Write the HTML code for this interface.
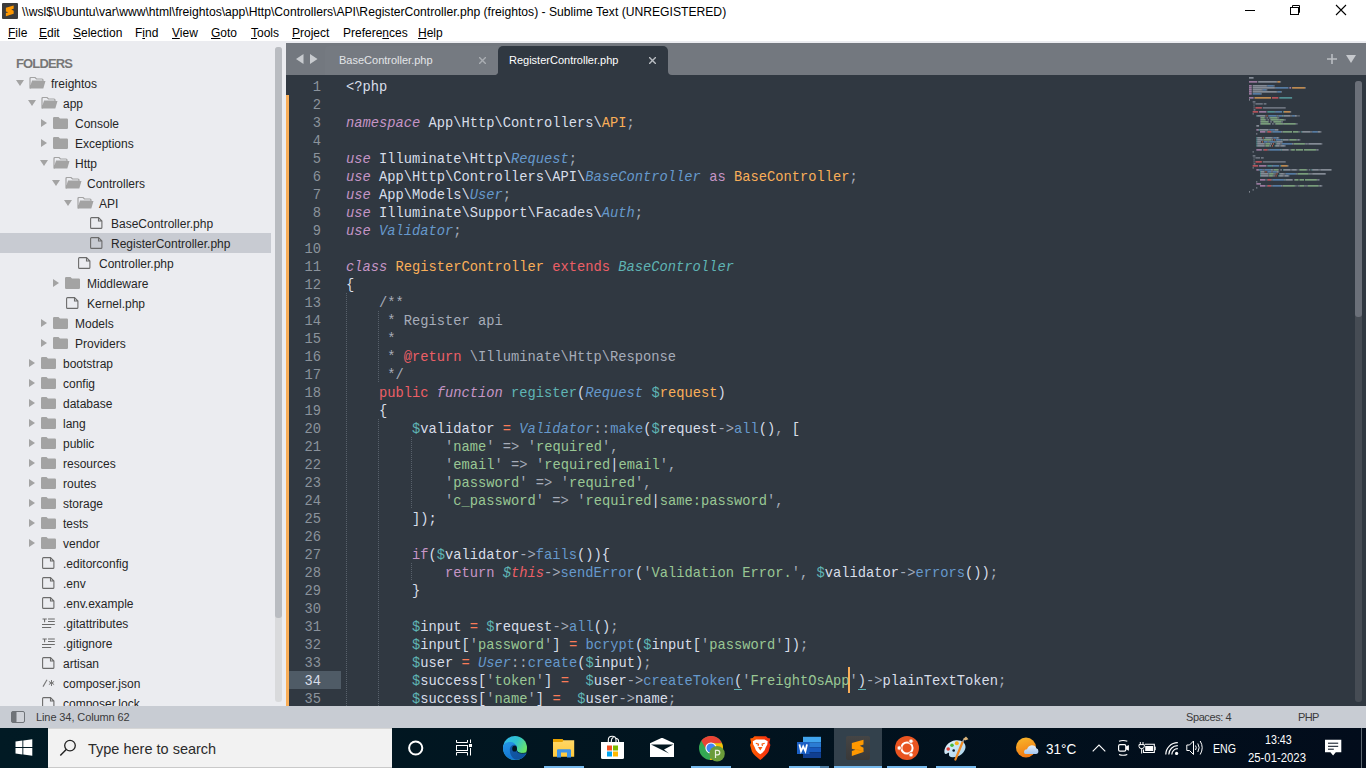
<!DOCTYPE html><html><head><meta charset="utf-8"><style>
*{margin:0;padding:0;box-sizing:border-box}
html,body{width:1366px;height:768px;overflow:hidden;background:#fff;position:relative;font-family:"Liberation Sans",sans-serif}
.a{position:absolute}
#title{left:0;top:0;width:1366px;height:22px;background:#fff}
#ttext{left:22px;top:4px;font-size:12.15px;line-height:16px;color:#000;white-space:pre}
#menu{left:0;top:22px;width:1366px;height:19px;background:#fff}
.mi{position:absolute;top:3px;font-size:12px;line-height:16px;color:#000;white-space:pre}
.mi u{text-decoration:underline;text-underline-offset:1px}
#side{left:0;top:41px;width:286px;height:665px;background:#ebecf0;overflow:hidden}
.row{position:absolute;left:0;width:271px;height:20px}
.row.sel{background:#c8cbd2}
.lbl{position:absolute;top:3px;font-size:12px;line-height:16px;color:#262626;white-space:pre}
#fold{left:16px;top:15px;font-size:13px;letter-spacing:-0.85px;font-weight:bold;color:#777;line-height:16px}
#tabs{left:286px;top:41px;width:1080px;height:34px;background:#ebecf0}
#tabbar{left:286px;top:43px;width:1080px;height:32px;background:#73787f}
.tab{position:absolute;top:3px;height:29px;border-radius:4px 4px 0 0}
.tabt{position:absolute;top:9px;font-size:11px;line-height:16px;white-space:pre}
#ed{left:286px;top:75px;width:1080px;height:631px;background:#303841;overflow:hidden}
#code{position:absolute;left:60px;top:4px;font-family:"Liberation Mono",monospace;font-size:13.75px;line-height:18px;color:#d8dee9;white-space:pre}
#code i,#mm i{font-style:normal}
i.w{color:#d8dee9} i.wu{color:#d8dee9}
i.g{color:#a6acb9}
i.p{color:#c695c6;font-style:italic!important}
i.pn{color:#c695c6}
i.o{color:#f9ae58}
i.bi{color:#6699cc;font-style:italic!important}
i.b{color:#6699cc}
i.t{color:#5fb4b4}
i.ti{color:#5fb4b4;font-style:italic!important}
i.r{color:#ec5f66}
i.ri{color:#ec5f66;font-style:italic!important}
i.op{color:#f97b58}
i.s{color:#99c794}
#gut{position:absolute;left:0;top:4px;width:35px;font-family:"Liberation Mono",monospace;font-size:13.75px;line-height:18px;color:#8b939c;text-align:right;white-space:pre}
#mm{position:absolute;left:963px;top:2px;font-family:"Liberation Mono",monospace;font-size:13.75px;line-height:18px;color:#d8dee9;white-space:pre;transform:scale(0.1111);transform-origin:0 0}
.gd{position:absolute;width:1px;background:repeating-linear-gradient(to bottom,#58616b 0 1px,transparent 1px 2px)}
#status{left:0;top:706px;width:1366px;height:22px;background:#c8ccd3}
#task{left:0;top:728px;width:1366px;height:40px;background:linear-gradient(to right,#011a24 0%,#01141f 50%,#020c1b 100%)}
</style></head><body><div id="title" class="a"><svg class="a" style="left:2px;top:3px" width="16" height="16" viewBox="0 0 16 16"><rect x="0" y="0" width="16" height="16" rx="1" fill="#3c3c3c"/><g transform="scale(0.6667)"><path d="M5.83 7.08 L17.5 3.75 L17.5 8.54 L13.75 9.79 L17.5 11.67 L17.5 16.04 L5.83 20 L5.83 15 L9.58 13.75 L5.83 12.71Z" fill="#ff9800"/></g></svg><div id="ttext" class="a">\\wsl$\Ubuntu\var\www\html\freightos\app\Http\Controllers\API\RegisterController.php (freightos) - Sublime Text (UNREGISTERED)</div><svg class="a" style="left:1240px;top:0" width="126" height="22"><rect x="5" y="10" width="10" height="1" fill="#000"/><rect x="50.5" y="7.5" width="8" height="7" fill="none" stroke="#000" stroke-width="1"/><path d="M52.5 7.5 V5.5 H59.5 V12.5 H58.5" fill="none" stroke="#000" stroke-width="1"/><path d="M96 5 L106 15 M106 5 L96 15" stroke="#000" stroke-width="1.1"/></svg></div><div id="menu" class="a"><div class="mi" style="left:8px"><u>F</u>ile</div><div class="mi" style="left:39px"><u>E</u>dit</div><div class="mi" style="left:73px"><u>S</u>election</div><div class="mi" style="left:135px">F<u>i</u>nd</div><div class="mi" style="left:172px"><u>V</u>iew</div><div class="mi" style="left:211px"><u>G</u>oto</div><div class="mi" style="left:251px"><u>T</u>ools</div><div class="mi" style="left:292px"><u>P</u>roject</div><div class="mi" style="left:343px">Prefere<u>n</u>ces</div><div class="mi" style="left:418px"><u>H</u>elp</div></div><div id="side" class="a"><div id="fold" class="a">FOLDERS</div><div class="row" style="top:32px"><svg class="a" style="left:16px;top:7px" width="8" height="6"><path d="M0 0H8L4 6Z" fill="#a3a3a3"/></svg><svg class="a" style="left:29px;top:4px" width="17" height="12" viewBox="0 0 17 12"><path d="M1 11 V1.5 Q1 0.5 2 0.5 H6 L7.5 2 H13 Q14 2 14 3 V4 H3.5 L1.5 11Z" fill="none" stroke="#a3a3a3" stroke-width="1.2"/><path d="M3.3 4 H16.5 L14.3 11.5 H1 Z" fill="#a3a3a3"/></svg><div class="lbl" style="left:51px">freightos</div></div><div class="row" style="top:52px"><svg class="a" style="left:28px;top:7px" width="8" height="6"><path d="M0 0H8L4 6Z" fill="#a3a3a3"/></svg><svg class="a" style="left:41px;top:4px" width="17" height="12" viewBox="0 0 17 12"><path d="M1 11 V1.5 Q1 0.5 2 0.5 H6 L7.5 2 H13 Q14 2 14 3 V4 H3.5 L1.5 11Z" fill="none" stroke="#a3a3a3" stroke-width="1.2"/><path d="M3.3 4 H16.5 L14.3 11.5 H1 Z" fill="#a3a3a3"/></svg><div class="lbl" style="left:63px">app</div></div><div class="row" style="top:72px"><svg class="a" style="left:41px;top:6px" width="6" height="8"><path d="M0 0V8L6 4Z" fill="#a3a3a3"/></svg><svg class="a" style="left:53px;top:4px" width="15" height="12" viewBox="0 0 15 12"><path d="M0 1.2 Q0 0 1.2 0 H5.5 L7 1.5 H13.8 Q15 1.5 15 2.7 V10.8 Q15 12 13.8 12 H1.2 Q0 12 0 10.8Z" fill="#a3a3a3"/></svg><div class="lbl" style="left:75px">Console</div></div><div class="row" style="top:92px"><svg class="a" style="left:41px;top:6px" width="6" height="8"><path d="M0 0V8L6 4Z" fill="#a3a3a3"/></svg><svg class="a" style="left:53px;top:4px" width="15" height="12" viewBox="0 0 15 12"><path d="M0 1.2 Q0 0 1.2 0 H5.5 L7 1.5 H13.8 Q15 1.5 15 2.7 V10.8 Q15 12 13.8 12 H1.2 Q0 12 0 10.8Z" fill="#a3a3a3"/></svg><div class="lbl" style="left:75px">Exceptions</div></div><div class="row" style="top:112px"><svg class="a" style="left:40px;top:7px" width="8" height="6"><path d="M0 0H8L4 6Z" fill="#a3a3a3"/></svg><svg class="a" style="left:53px;top:4px" width="17" height="12" viewBox="0 0 17 12"><path d="M1 11 V1.5 Q1 0.5 2 0.5 H6 L7.5 2 H13 Q14 2 14 3 V4 H3.5 L1.5 11Z" fill="none" stroke="#a3a3a3" stroke-width="1.2"/><path d="M3.3 4 H16.5 L14.3 11.5 H1 Z" fill="#a3a3a3"/></svg><div class="lbl" style="left:75px">Http</div></div><div class="row" style="top:132px"><svg class="a" style="left:52px;top:7px" width="8" height="6"><path d="M0 0H8L4 6Z" fill="#a3a3a3"/></svg><svg class="a" style="left:65px;top:4px" width="17" height="12" viewBox="0 0 17 12"><path d="M1 11 V1.5 Q1 0.5 2 0.5 H6 L7.5 2 H13 Q14 2 14 3 V4 H3.5 L1.5 11Z" fill="none" stroke="#a3a3a3" stroke-width="1.2"/><path d="M3.3 4 H16.5 L14.3 11.5 H1 Z" fill="#a3a3a3"/></svg><div class="lbl" style="left:87px">Controllers</div></div><div class="row" style="top:152px"><svg class="a" style="left:64px;top:7px" width="8" height="6"><path d="M0 0H8L4 6Z" fill="#a3a3a3"/></svg><svg class="a" style="left:77px;top:4px" width="17" height="12" viewBox="0 0 17 12"><path d="M1 11 V1.5 Q1 0.5 2 0.5 H6 L7.5 2 H13 Q14 2 14 3 V4 H3.5 L1.5 11Z" fill="none" stroke="#a3a3a3" stroke-width="1.2"/><path d="M3.3 4 H16.5 L14.3 11.5 H1 Z" fill="#a3a3a3"/></svg><div class="lbl" style="left:99px">API</div></div><div class="row" style="top:172px"><svg class="a" style="left:90px;top:4px" width="13" height="12" viewBox="0 0 13 12"><path d="M1.5 0.6 H8.5 L11.9 4 V10.4 Q11.9 11.4 10.9 11.4 H1.5 Q0.6 11.4 0.6 10.4 V1.6 Q0.6 0.6 1.5 0.6Z M8.5 0.6 V4 H11.9" fill="none" stroke="#6b6b6b" stroke-width="1.1"/></svg><div class="lbl" style="left:111px">BaseController.php</div></div><div class="row sel" style="top:192px"><svg class="a" style="left:90px;top:4px" width="13" height="12" viewBox="0 0 13 12"><path d="M1.5 0.6 H8.5 L11.9 4 V10.4 Q11.9 11.4 10.9 11.4 H1.5 Q0.6 11.4 0.6 10.4 V1.6 Q0.6 0.6 1.5 0.6Z M8.5 0.6 V4 H11.9" fill="none" stroke="#6b6b6b" stroke-width="1.1"/></svg><div class="lbl" style="left:111px">RegisterController.php</div></div><div class="row" style="top:212px"><svg class="a" style="left:78px;top:4px" width="13" height="12" viewBox="0 0 13 12"><path d="M1.5 0.6 H8.5 L11.9 4 V10.4 Q11.9 11.4 10.9 11.4 H1.5 Q0.6 11.4 0.6 10.4 V1.6 Q0.6 0.6 1.5 0.6Z M8.5 0.6 V4 H11.9" fill="none" stroke="#6b6b6b" stroke-width="1.1"/></svg><div class="lbl" style="left:99px">Controller.php</div></div><div class="row" style="top:232px"><svg class="a" style="left:53px;top:6px" width="6" height="8"><path d="M0 0V8L6 4Z" fill="#a3a3a3"/></svg><svg class="a" style="left:65px;top:4px" width="15" height="12" viewBox="0 0 15 12"><path d="M0 1.2 Q0 0 1.2 0 H5.5 L7 1.5 H13.8 Q15 1.5 15 2.7 V10.8 Q15 12 13.8 12 H1.2 Q0 12 0 10.8Z" fill="#a3a3a3"/></svg><div class="lbl" style="left:87px">Middleware</div></div><div class="row" style="top:252px"><svg class="a" style="left:66px;top:4px" width="13" height="12" viewBox="0 0 13 12"><path d="M1.5 0.6 H8.5 L11.9 4 V10.4 Q11.9 11.4 10.9 11.4 H1.5 Q0.6 11.4 0.6 10.4 V1.6 Q0.6 0.6 1.5 0.6Z M8.5 0.6 V4 H11.9" fill="none" stroke="#6b6b6b" stroke-width="1.1"/></svg><div class="lbl" style="left:87px">Kernel.php</div></div><div class="row" style="top:272px"><svg class="a" style="left:41px;top:6px" width="6" height="8"><path d="M0 0V8L6 4Z" fill="#a3a3a3"/></svg><svg class="a" style="left:53px;top:4px" width="15" height="12" viewBox="0 0 15 12"><path d="M0 1.2 Q0 0 1.2 0 H5.5 L7 1.5 H13.8 Q15 1.5 15 2.7 V10.8 Q15 12 13.8 12 H1.2 Q0 12 0 10.8Z" fill="#a3a3a3"/></svg><div class="lbl" style="left:75px">Models</div></div><div class="row" style="top:292px"><svg class="a" style="left:41px;top:6px" width="6" height="8"><path d="M0 0V8L6 4Z" fill="#a3a3a3"/></svg><svg class="a" style="left:53px;top:4px" width="15" height="12" viewBox="0 0 15 12"><path d="M0 1.2 Q0 0 1.2 0 H5.5 L7 1.5 H13.8 Q15 1.5 15 2.7 V10.8 Q15 12 13.8 12 H1.2 Q0 12 0 10.8Z" fill="#a3a3a3"/></svg><div class="lbl" style="left:75px">Providers</div></div><div class="row" style="top:312px"><svg class="a" style="left:29px;top:6px" width="6" height="8"><path d="M0 0V8L6 4Z" fill="#a3a3a3"/></svg><svg class="a" style="left:41px;top:4px" width="15" height="12" viewBox="0 0 15 12"><path d="M0 1.2 Q0 0 1.2 0 H5.5 L7 1.5 H13.8 Q15 1.5 15 2.7 V10.8 Q15 12 13.8 12 H1.2 Q0 12 0 10.8Z" fill="#a3a3a3"/></svg><div class="lbl" style="left:63px">bootstrap</div></div><div class="row" style="top:332px"><svg class="a" style="left:29px;top:6px" width="6" height="8"><path d="M0 0V8L6 4Z" fill="#a3a3a3"/></svg><svg class="a" style="left:41px;top:4px" width="15" height="12" viewBox="0 0 15 12"><path d="M0 1.2 Q0 0 1.2 0 H5.5 L7 1.5 H13.8 Q15 1.5 15 2.7 V10.8 Q15 12 13.8 12 H1.2 Q0 12 0 10.8Z" fill="#a3a3a3"/></svg><div class="lbl" style="left:63px">config</div></div><div class="row" style="top:352px"><svg class="a" style="left:29px;top:6px" width="6" height="8"><path d="M0 0V8L6 4Z" fill="#a3a3a3"/></svg><svg class="a" style="left:41px;top:4px" width="15" height="12" viewBox="0 0 15 12"><path d="M0 1.2 Q0 0 1.2 0 H5.5 L7 1.5 H13.8 Q15 1.5 15 2.7 V10.8 Q15 12 13.8 12 H1.2 Q0 12 0 10.8Z" fill="#a3a3a3"/></svg><div class="lbl" style="left:63px">database</div></div><div class="row" style="top:372px"><svg class="a" style="left:29px;top:6px" width="6" height="8"><path d="M0 0V8L6 4Z" fill="#a3a3a3"/></svg><svg class="a" style="left:41px;top:4px" width="15" height="12" viewBox="0 0 15 12"><path d="M0 1.2 Q0 0 1.2 0 H5.5 L7 1.5 H13.8 Q15 1.5 15 2.7 V10.8 Q15 12 13.8 12 H1.2 Q0 12 0 10.8Z" fill="#a3a3a3"/></svg><div class="lbl" style="left:63px">lang</div></div><div class="row" style="top:392px"><svg class="a" style="left:29px;top:6px" width="6" height="8"><path d="M0 0V8L6 4Z" fill="#a3a3a3"/></svg><svg class="a" style="left:41px;top:4px" width="15" height="12" viewBox="0 0 15 12"><path d="M0 1.2 Q0 0 1.2 0 H5.5 L7 1.5 H13.8 Q15 1.5 15 2.7 V10.8 Q15 12 13.8 12 H1.2 Q0 12 0 10.8Z" fill="#a3a3a3"/></svg><div class="lbl" style="left:63px">public</div></div><div class="row" style="top:412px"><svg class="a" style="left:29px;top:6px" width="6" height="8"><path d="M0 0V8L6 4Z" fill="#a3a3a3"/></svg><svg class="a" style="left:41px;top:4px" width="15" height="12" viewBox="0 0 15 12"><path d="M0 1.2 Q0 0 1.2 0 H5.5 L7 1.5 H13.8 Q15 1.5 15 2.7 V10.8 Q15 12 13.8 12 H1.2 Q0 12 0 10.8Z" fill="#a3a3a3"/></svg><div class="lbl" style="left:63px">resources</div></div><div class="row" style="top:432px"><svg class="a" style="left:29px;top:6px" width="6" height="8"><path d="M0 0V8L6 4Z" fill="#a3a3a3"/></svg><svg class="a" style="left:41px;top:4px" width="15" height="12" viewBox="0 0 15 12"><path d="M0 1.2 Q0 0 1.2 0 H5.5 L7 1.5 H13.8 Q15 1.5 15 2.7 V10.8 Q15 12 13.8 12 H1.2 Q0 12 0 10.8Z" fill="#a3a3a3"/></svg><div class="lbl" style="left:63px">routes</div></div><div class="row" style="top:452px"><svg class="a" style="left:29px;top:6px" width="6" height="8"><path d="M0 0V8L6 4Z" fill="#a3a3a3"/></svg><svg class="a" style="left:41px;top:4px" width="15" height="12" viewBox="0 0 15 12"><path d="M0 1.2 Q0 0 1.2 0 H5.5 L7 1.5 H13.8 Q15 1.5 15 2.7 V10.8 Q15 12 13.8 12 H1.2 Q0 12 0 10.8Z" fill="#a3a3a3"/></svg><div class="lbl" style="left:63px">storage</div></div><div class="row" style="top:472px"><svg class="a" style="left:29px;top:6px" width="6" height="8"><path d="M0 0V8L6 4Z" fill="#a3a3a3"/></svg><svg class="a" style="left:41px;top:4px" width="15" height="12" viewBox="0 0 15 12"><path d="M0 1.2 Q0 0 1.2 0 H5.5 L7 1.5 H13.8 Q15 1.5 15 2.7 V10.8 Q15 12 13.8 12 H1.2 Q0 12 0 10.8Z" fill="#a3a3a3"/></svg><div class="lbl" style="left:63px">tests</div></div><div class="row" style="top:492px"><svg class="a" style="left:29px;top:6px" width="6" height="8"><path d="M0 0V8L6 4Z" fill="#a3a3a3"/></svg><svg class="a" style="left:41px;top:4px" width="15" height="12" viewBox="0 0 15 12"><path d="M0 1.2 Q0 0 1.2 0 H5.5 L7 1.5 H13.8 Q15 1.5 15 2.7 V10.8 Q15 12 13.8 12 H1.2 Q0 12 0 10.8Z" fill="#a3a3a3"/></svg><div class="lbl" style="left:63px">vendor</div></div><div class="row" style="top:512px"><svg class="a" style="left:42px;top:4px" width="13" height="12" viewBox="0 0 13 12"><path d="M1.5 0.6 H8.5 L11.9 4 V10.4 Q11.9 11.4 10.9 11.4 H1.5 Q0.6 11.4 0.6 10.4 V1.6 Q0.6 0.6 1.5 0.6Z M8.5 0.6 V4 H11.9" fill="none" stroke="#6b6b6b" stroke-width="1.1"/></svg><div class="lbl" style="left:63px">.editorconfig</div></div><div class="row" style="top:532px"><svg class="a" style="left:42px;top:4px" width="13" height="12" viewBox="0 0 13 12"><path d="M1.5 0.6 H8.5 L11.9 4 V10.4 Q11.9 11.4 10.9 11.4 H1.5 Q0.6 11.4 0.6 10.4 V1.6 Q0.6 0.6 1.5 0.6Z M8.5 0.6 V4 H11.9" fill="none" stroke="#6b6b6b" stroke-width="1.1"/></svg><div class="lbl" style="left:63px">.env</div></div><div class="row" style="top:552px"><svg class="a" style="left:42px;top:4px" width="13" height="12" viewBox="0 0 13 12"><path d="M1.5 0.6 H8.5 L11.9 4 V10.4 Q11.9 11.4 10.9 11.4 H1.5 Q0.6 11.4 0.6 10.4 V1.6 Q0.6 0.6 1.5 0.6Z M8.5 0.6 V4 H11.9" fill="none" stroke="#6b6b6b" stroke-width="1.1"/></svg><div class="lbl" style="left:63px">.env.example</div></div><div class="row" style="top:572px"><svg class="a" style="left:42px;top:4px" width="14" height="12" viewBox="0 0 14 12"><path d="M0.5 2H4.8 M2.6 2V5.2 M6 2H12.8 M6 4.5H12.8 M0 7.5H12.8 M0 10.5H9.2" stroke="#6b6b6b" stroke-width="1.1"/></svg><div class="lbl" style="left:63px">.gitattributes</div></div><div class="row" style="top:592px"><svg class="a" style="left:42px;top:4px" width="14" height="12" viewBox="0 0 14 12"><path d="M0.5 2H4.8 M2.6 2V5.2 M6 2H12.8 M6 4.5H12.8 M0 7.5H12.8 M0 10.5H9.2" stroke="#6b6b6b" stroke-width="1.1"/></svg><div class="lbl" style="left:63px">.gitignore</div></div><div class="row" style="top:612px"><svg class="a" style="left:42px;top:4px" width="13" height="12" viewBox="0 0 13 12"><path d="M1.5 0.6 H8.5 L11.9 4 V10.4 Q11.9 11.4 10.9 11.4 H1.5 Q0.6 11.4 0.6 10.4 V1.6 Q0.6 0.6 1.5 0.6Z M8.5 0.6 V4 H11.9" fill="none" stroke="#6b6b6b" stroke-width="1.1"/></svg><div class="lbl" style="left:63px">artisan</div></div><div class="row" style="top:632px"><svg class="a" style="left:42px;top:4px" width="14" height="12" viewBox="0 0 14 12"><path d="M1 9.6 L5 2.8" stroke="#777" stroke-width="1.1"/><path d="M9.5 3 V9 M6.9 4.5 L12.1 7.5 M6.9 7.5 L12.1 4.5" stroke="#777" stroke-width="1"/></svg><div class="lbl" style="left:63px">composer.json</div></div><div class="row" style="top:652px"><svg class="a" style="left:42px;top:4px" width="13" height="12" viewBox="0 0 13 12"><path d="M1.5 0.6 H8.5 L11.9 4 V10.4 Q11.9 11.4 10.9 11.4 H1.5 Q0.6 11.4 0.6 10.4 V1.6 Q0.6 0.6 1.5 0.6Z M8.5 0.6 V4 H11.9" fill="none" stroke="#6b6b6b" stroke-width="1.1"/></svg><div class="lbl" style="left:63px">composer.lock</div></div><div class="a" style="left:275px;top:6px;width:7px;height:655px;border-radius:3px;background:#d9dadc"></div><div class="a" style="left:275px;top:6px;width:7px;height:571px;border-radius:3px;background:#b9bcc1"></div></div><div id="tabs" class="a"></div><div id="tabbar" class="a"><div class="a" style="left:200px;top:26px;width:194px;height:6px;background:#303841"></div><div class="a" style="left:0;top:0;width:212px;height:32px;background:#73787f;border-bottom-right-radius:4px"></div><div class="a" style="left:382px;top:0;width:698px;height:32px;background:#73787f;border-bottom-left-radius:4px"></div><svg class="a" style="left:10px;top:11px" width="22" height="10"><path d="M0 5 L7.5 0 V10Z M21.5 5 L14 0 V10Z" fill="#c8cbcf"/></svg><div class="a" style="left:39px;top:3px;width:173px;height:29px;background:#757a81;border-radius:4px 0 4px 0"></div><div class="tabt" style="left:53px;color:#e3e5e8">BaseController.php</div><svg class="a" style="left:193px;top:14px" width="7" height="7"><path d="M0 0L7 7M7 0L0 7" stroke="#a9adb2" stroke-width="1.4"/></svg><div class="tab" style="left:212px;width:170px;background:#303841;border-radius:5px 5px 0 0"></div><div class="tabt" style="left:223px;color:#ffffff">RegisterController.php</div><svg class="a" style="left:363px;top:14px" width="7" height="7"><path d="M0 0L7 7M7 0L0 7" stroke="#b9bdc2" stroke-width="1.4"/></svg><svg class="a" style="left:1041px;top:10px" width="30" height="12"><path d="M5 1V11 M0 6H10" stroke="#babdc2" stroke-width="1.6"/><path d="M19 2H29L24 10Z" fill="#c6c9cd"/></svg></div><div id="ed" class="a"><div class="a" style="left:0;top:20px;width:3px;height:611px;background:#f9ae58"></div><div class="a" style="left:3px;top:596px;width:52px;height:18px;background:#4f5b66"></div><div id="gut">1
2
3
4
5
6
7
8
9
10
11
12
13
14
15
16
17
18
19
20
21
22
23
24
25
26
27
28
29
30
31
32
33
<span style="color:#d8dee9">34</span>
35</div><div id="code"><i class="w">&lt;?php</i>

<i class="p">namespace</i> <i class="w">App\Http\Controllers</i><i class="w">\</i><i class="o">API</i><i class="g">;</i>

<i class="p">use</i> <i class="w">Illuminate\Http</i><i class="w">\</i><i class="bi">Request</i><i class="g">;</i>
<i class="p">use</i> <i class="w">App\Http\Controllers\API</i><i class="w">\</i><i class="bi">BaseController</i> <i class="pn">as</i> <i class="o">BaseController</i><i class="g">;</i>
<i class="p">use</i> <i class="w">App\Models</i><i class="w">\</i><i class="bi">User</i><i class="g">;</i>
<i class="p">use</i> <i class="w">Illuminate\Support\Facades</i><i class="w">\</i><i class="bi">Auth</i><i class="g">;</i>
<i class="p">use</i> <i class="bi">Validator</i><i class="g">;</i>

<i class="p">class</i> <i class="o">RegisterController</i> <i class="r">extends</i> <i class="ti">BaseController</i>
<i class="w">{</i>
    <i class="g">/**</i>
    <i class="g"> * Register api</i>
    <i class="g"> *</i>
    <i class="g"> * </i><i class="r">@return</i><i class="g"> \Illuminate\Http\Response</i>
    <i class="g"> */</i>
    <i class="r">public</i> <i class="p">function</i> <i class="t">register</i><i class="w">(</i><i class="bi">Request</i> <i class="t">$</i><i class="o">request</i><i class="w">)</i>
    <i class="w">{</i>
        <i class="t">$</i><i class="w">validator</i> <i class="op">=</i> <i class="bi">Validator</i><i class="g">::</i><i class="b">make</i><i class="w">(</i><i class="t">$</i><i class="w">request</i><i class="g">-&gt;</i><i class="b">all</i><i class="w">()</i><i class="g">,</i> <i class="w">[</i>
            <i class="g">&#x27;</i><i class="s">name</i><i class="g">&#x27;</i> <i class="g">=&gt;</i> <i class="g">&#x27;</i><i class="s">required</i><i class="g">&#x27;</i><i class="g">,</i>
            <i class="g">&#x27;</i><i class="s">email</i><i class="g">&#x27;</i> <i class="g">=&gt;</i> <i class="g">&#x27;</i><i class="s">required</i><i class="w">|</i><i class="s">email</i><i class="g">&#x27;</i><i class="g">,</i>
            <i class="g">&#x27;</i><i class="s">password</i><i class="g">&#x27;</i> <i class="g">=&gt;</i> <i class="g">&#x27;</i><i class="s">required</i><i class="g">&#x27;</i><i class="g">,</i>
            <i class="g">&#x27;</i><i class="s">c_password</i><i class="g">&#x27;</i> <i class="g">=&gt;</i> <i class="g">&#x27;</i><i class="s">required</i><i class="w">|</i><i class="s">same:password</i><i class="g">&#x27;</i><i class="g">,</i>
        <i class="w">]);</i>

        <i class="pn">if</i><i class="w">(</i><i class="t">$</i><i class="w">validator</i><i class="g">-&gt;</i><i class="b">fails</i><i class="w">()){</i>
            <i class="pn">return</i> <i class="ti">$</i><i class="ri">this</i><i class="g">-&gt;</i><i class="b">sendError</i><i class="w">(</i><i class="g">&#x27;</i><i class="s">Validation Error.</i><i class="g">&#x27;</i><i class="g">,</i> <i class="t">$</i><i class="w">validator</i><i class="g">-&gt;</i><i class="b">errors</i><i class="w">())</i><i class="g">;</i>
        <i class="w">}</i>

        <i class="t">$</i><i class="w">input</i> <i class="op">=</i> <i class="t">$</i><i class="w">request</i><i class="g">-&gt;</i><i class="b">all</i><i class="w">()</i><i class="g">;</i>
        <i class="t">$</i><i class="w">input[</i><i class="g">&#x27;</i><i class="s">password</i><i class="g">&#x27;</i><i class="w">]</i> <i class="op">=</i> <i class="b">bcrypt</i><i class="w">(</i><i class="t">$</i><i class="w">input[</i><i class="g">&#x27;</i><i class="s">password</i><i class="g">&#x27;</i><i class="w">])</i><i class="g">;</i>
        <i class="t">$</i><i class="w">user</i> <i class="op">=</i> <i class="bi">User</i><i class="g">::</i><i class="b">create</i><i class="w">(</i><i class="t">$</i><i class="w">input)</i><i class="g">;</i>
        <i class="t">$</i><i class="w">success[</i><i class="g">&#x27;</i><i class="s">token</i><i class="g">&#x27;</i><i class="w">]</i> <i class="op">=</i>  <i class="t">$</i><i class="w">user</i><i class="g">-&gt;</i><i class="b">createToken</i><i class="wu">(</i><i class="g">&#x27;</i><i class="s">FreightOsApp</i><i class="g">&#x27;</i><i class="wu">)</i><i class="g">-&gt;</i><i class="w">plainTextToken</i><i class="g">;</i>
        <i class="t">$</i><i class="w">success[</i><i class="g">&#x27;</i><i class="s">name</i><i class="g">&#x27;</i><i class="w">]</i> <i class="op">=</i>  <i class="t">$</i><i class="w">user</i><i class="g">-&gt;</i><i class="w">name</i><i class="g">;</i></div><div class="a" style="left:562px;top:592px;width:2px;height:26px;background:#f9ae58"></div><div class="a" style="left:447.75px;top:614px;width:8.25px;height:1px;background:#5fb4b4"></div><div class="a" style="left:571.50px;top:614px;width:8.25px;height:1px;background:#5fb4b4"></div><div class="gd" style="left:60px;top:218px;height:413px"></div><div class="gd" style="left:92px;top:236px;height:72px"></div><div class="gd" style="left:92px;top:344px;height:287px"></div><div class="gd" style="left:125px;top:362px;height:72px"></div><div class="gd" style="left:125px;top:488px;height:18px"></div><svg class="a" style="left:963px;top:2px" width="100" height="120"><rect x="0.00" y="0" width="4.58" height="1.7" fill="#d8dee9" opacity="0.5"/><rect x="0.00" y="4" width="8.25" height="1.7" fill="#c695c6" opacity="0.7"/><rect x="9.17" y="4" width="18.34" height="1.7" fill="#d8dee9" opacity="0.5"/><rect x="27.51" y="4" width="0.92" height="1.7" fill="#d8dee9" opacity="0.5"/><rect x="28.43" y="4" width="2.75" height="1.7" fill="#f9ae58" opacity="0.7"/><rect x="31.18" y="4" width="0.92" height="1.7" fill="#a6acb9" opacity="0.5"/><rect x="0.00" y="8" width="2.75" height="1.7" fill="#c695c6" opacity="0.7"/><rect x="3.67" y="8" width="13.76" height="1.7" fill="#d8dee9" opacity="0.5"/><rect x="17.42" y="8" width="0.92" height="1.7" fill="#d8dee9" opacity="0.5"/><rect x="18.34" y="8" width="6.42" height="1.7" fill="#6699cc" opacity="0.7"/><rect x="24.76" y="8" width="0.92" height="1.7" fill="#a6acb9" opacity="0.5"/><rect x="0.00" y="10" width="2.75" height="1.7" fill="#c695c6" opacity="0.7"/><rect x="3.67" y="10" width="22.01" height="1.7" fill="#d8dee9" opacity="0.5"/><rect x="25.68" y="10" width="0.92" height="1.7" fill="#d8dee9" opacity="0.5"/><rect x="26.59" y="10" width="12.84" height="1.7" fill="#6699cc" opacity="0.7"/><rect x="40.35" y="10" width="1.83" height="1.7" fill="#c695c6" opacity="0.7"/><rect x="43.10" y="10" width="12.84" height="1.7" fill="#f9ae58" opacity="0.7"/><rect x="55.94" y="10" width="0.92" height="1.7" fill="#a6acb9" opacity="0.5"/><rect x="0.00" y="12" width="2.75" height="1.7" fill="#c695c6" opacity="0.7"/><rect x="3.67" y="12" width="9.17" height="1.7" fill="#d8dee9" opacity="0.5"/><rect x="12.84" y="12" width="0.92" height="1.7" fill="#d8dee9" opacity="0.5"/><rect x="13.76" y="12" width="3.67" height="1.7" fill="#6699cc" opacity="0.7"/><rect x="17.42" y="12" width="0.92" height="1.7" fill="#a6acb9" opacity="0.5"/><rect x="0.00" y="14" width="2.75" height="1.7" fill="#c695c6" opacity="0.7"/><rect x="3.67" y="14" width="23.84" height="1.7" fill="#d8dee9" opacity="0.5"/><rect x="27.51" y="14" width="0.92" height="1.7" fill="#d8dee9" opacity="0.5"/><rect x="28.43" y="14" width="3.67" height="1.7" fill="#6699cc" opacity="0.7"/><rect x="32.09" y="14" width="0.92" height="1.7" fill="#a6acb9" opacity="0.5"/><rect x="0.00" y="16" width="2.75" height="1.7" fill="#c695c6" opacity="0.7"/><rect x="3.67" y="16" width="8.25" height="1.7" fill="#6699cc" opacity="0.7"/><rect x="11.92" y="16" width="0.92" height="1.7" fill="#a6acb9" opacity="0.5"/><rect x="0.00" y="20" width="4.58" height="1.7" fill="#c695c6" opacity="0.7"/><rect x="5.50" y="20" width="16.51" height="1.7" fill="#f9ae58" opacity="0.7"/><rect x="22.93" y="20" width="6.42" height="1.7" fill="#ec5f66" opacity="0.7"/><rect x="30.26" y="20" width="12.84" height="1.7" fill="#5fb4b4" opacity="0.7"/><rect x="0.00" y="22" width="0.92" height="1.7" fill="#d8dee9" opacity="0.5"/><rect x="3.67" y="24" width="2.75" height="1.7" fill="#a6acb9" opacity="0.5"/><rect x="4.58" y="26" width="0.92" height="1.7" fill="#a6acb9" opacity="0.5"/><rect x="6.42" y="26" width="7.34" height="1.7" fill="#a6acb9" opacity="0.5"/><rect x="14.67" y="26" width="2.75" height="1.7" fill="#a6acb9" opacity="0.5"/><rect x="4.58" y="28" width="0.92" height="1.7" fill="#a6acb9" opacity="0.5"/><rect x="4.58" y="30" width="0.92" height="1.7" fill="#a6acb9" opacity="0.5"/><rect x="6.42" y="30" width="6.42" height="1.7" fill="#ec5f66" opacity="0.7"/><rect x="13.76" y="30" width="22.93" height="1.7" fill="#a6acb9" opacity="0.5"/><rect x="4.58" y="32" width="1.83" height="1.7" fill="#a6acb9" opacity="0.5"/><rect x="3.67" y="34" width="5.50" height="1.7" fill="#ec5f66" opacity="0.7"/><rect x="10.09" y="34" width="7.34" height="1.7" fill="#c695c6" opacity="0.7"/><rect x="18.34" y="34" width="7.34" height="1.7" fill="#5fb4b4" opacity="0.7"/><rect x="25.68" y="34" width="0.92" height="1.7" fill="#d8dee9" opacity="0.5"/><rect x="26.59" y="34" width="6.42" height="1.7" fill="#6699cc" opacity="0.7"/><rect x="33.93" y="34" width="0.92" height="1.7" fill="#5fb4b4" opacity="0.7"/><rect x="34.85" y="34" width="6.42" height="1.7" fill="#f9ae58" opacity="0.7"/><rect x="41.27" y="34" width="0.92" height="1.7" fill="#d8dee9" opacity="0.5"/><rect x="3.67" y="36" width="0.92" height="1.7" fill="#d8dee9" opacity="0.5"/><rect x="7.34" y="38" width="0.92" height="1.7" fill="#5fb4b4" opacity="0.7"/><rect x="8.25" y="38" width="8.25" height="1.7" fill="#d8dee9" opacity="0.5"/><rect x="17.42" y="38" width="0.92" height="1.7" fill="#f97b58" opacity="0.7"/><rect x="19.26" y="38" width="8.25" height="1.7" fill="#6699cc" opacity="0.7"/><rect x="27.51" y="38" width="1.83" height="1.7" fill="#a6acb9" opacity="0.5"/><rect x="29.34" y="38" width="3.67" height="1.7" fill="#6699cc" opacity="0.7"/><rect x="33.01" y="38" width="0.92" height="1.7" fill="#d8dee9" opacity="0.5"/><rect x="33.93" y="38" width="0.92" height="1.7" fill="#5fb4b4" opacity="0.7"/><rect x="34.85" y="38" width="6.42" height="1.7" fill="#d8dee9" opacity="0.5"/><rect x="41.27" y="38" width="1.83" height="1.7" fill="#a6acb9" opacity="0.5"/><rect x="43.10" y="38" width="2.75" height="1.7" fill="#6699cc" opacity="0.7"/><rect x="45.85" y="38" width="1.83" height="1.7" fill="#d8dee9" opacity="0.5"/><rect x="47.68" y="38" width="0.92" height="1.7" fill="#a6acb9" opacity="0.5"/><rect x="49.52" y="38" width="0.92" height="1.7" fill="#d8dee9" opacity="0.5"/><rect x="11.00" y="40" width="0.92" height="1.7" fill="#a6acb9" opacity="0.5"/><rect x="11.92" y="40" width="3.67" height="1.7" fill="#99c794" opacity="0.7"/><rect x="15.59" y="40" width="0.92" height="1.7" fill="#a6acb9" opacity="0.5"/><rect x="17.42" y="40" width="1.83" height="1.7" fill="#a6acb9" opacity="0.5"/><rect x="20.17" y="40" width="0.92" height="1.7" fill="#a6acb9" opacity="0.5"/><rect x="21.09" y="40" width="7.34" height="1.7" fill="#99c794" opacity="0.7"/><rect x="28.43" y="40" width="0.92" height="1.7" fill="#a6acb9" opacity="0.5"/><rect x="29.34" y="40" width="0.92" height="1.7" fill="#a6acb9" opacity="0.5"/><rect x="11.00" y="42" width="0.92" height="1.7" fill="#a6acb9" opacity="0.5"/><rect x="11.92" y="42" width="4.58" height="1.7" fill="#99c794" opacity="0.7"/><rect x="16.51" y="42" width="0.92" height="1.7" fill="#a6acb9" opacity="0.5"/><rect x="18.34" y="42" width="1.83" height="1.7" fill="#a6acb9" opacity="0.5"/><rect x="21.09" y="42" width="0.92" height="1.7" fill="#a6acb9" opacity="0.5"/><rect x="22.01" y="42" width="7.34" height="1.7" fill="#99c794" opacity="0.7"/><rect x="29.34" y="42" width="0.92" height="1.7" fill="#d8dee9" opacity="0.5"/><rect x="30.26" y="42" width="4.58" height="1.7" fill="#99c794" opacity="0.7"/><rect x="34.85" y="42" width="0.92" height="1.7" fill="#a6acb9" opacity="0.5"/><rect x="35.76" y="42" width="0.92" height="1.7" fill="#a6acb9" opacity="0.5"/><rect x="11.00" y="44" width="0.92" height="1.7" fill="#a6acb9" opacity="0.5"/><rect x="11.92" y="44" width="7.34" height="1.7" fill="#99c794" opacity="0.7"/><rect x="19.26" y="44" width="0.92" height="1.7" fill="#a6acb9" opacity="0.5"/><rect x="21.09" y="44" width="1.83" height="1.7" fill="#a6acb9" opacity="0.5"/><rect x="23.84" y="44" width="0.92" height="1.7" fill="#a6acb9" opacity="0.5"/><rect x="24.76" y="44" width="7.34" height="1.7" fill="#99c794" opacity="0.7"/><rect x="32.09" y="44" width="0.92" height="1.7" fill="#a6acb9" opacity="0.5"/><rect x="33.01" y="44" width="0.92" height="1.7" fill="#a6acb9" opacity="0.5"/><rect x="11.00" y="46" width="0.92" height="1.7" fill="#a6acb9" opacity="0.5"/><rect x="11.92" y="46" width="9.17" height="1.7" fill="#99c794" opacity="0.7"/><rect x="21.09" y="46" width="0.92" height="1.7" fill="#a6acb9" opacity="0.5"/><rect x="22.93" y="46" width="1.83" height="1.7" fill="#a6acb9" opacity="0.5"/><rect x="25.68" y="46" width="0.92" height="1.7" fill="#a6acb9" opacity="0.5"/><rect x="26.59" y="46" width="7.34" height="1.7" fill="#99c794" opacity="0.7"/><rect x="33.93" y="46" width="0.92" height="1.7" fill="#d8dee9" opacity="0.5"/><rect x="34.85" y="46" width="11.92" height="1.7" fill="#99c794" opacity="0.7"/><rect x="46.77" y="46" width="0.92" height="1.7" fill="#a6acb9" opacity="0.5"/><rect x="47.68" y="46" width="0.92" height="1.7" fill="#a6acb9" opacity="0.5"/><rect x="7.34" y="48" width="2.75" height="1.7" fill="#d8dee9" opacity="0.5"/><rect x="7.34" y="52" width="1.83" height="1.7" fill="#c695c6" opacity="0.7"/><rect x="9.17" y="52" width="0.92" height="1.7" fill="#d8dee9" opacity="0.5"/><rect x="10.09" y="52" width="0.92" height="1.7" fill="#5fb4b4" opacity="0.7"/><rect x="11.00" y="52" width="8.25" height="1.7" fill="#d8dee9" opacity="0.5"/><rect x="19.26" y="52" width="1.83" height="1.7" fill="#a6acb9" opacity="0.5"/><rect x="21.09" y="52" width="4.58" height="1.7" fill="#6699cc" opacity="0.7"/><rect x="25.68" y="52" width="3.67" height="1.7" fill="#d8dee9" opacity="0.5"/><rect x="11.00" y="54" width="5.50" height="1.7" fill="#c695c6" opacity="0.7"/><rect x="17.42" y="54" width="0.92" height="1.7" fill="#5fb4b4" opacity="0.7"/><rect x="18.34" y="54" width="3.67" height="1.7" fill="#ec5f66" opacity="0.7"/><rect x="22.01" y="54" width="1.83" height="1.7" fill="#a6acb9" opacity="0.5"/><rect x="23.84" y="54" width="8.25" height="1.7" fill="#6699cc" opacity="0.7"/><rect x="32.09" y="54" width="0.92" height="1.7" fill="#d8dee9" opacity="0.5"/><rect x="33.01" y="54" width="0.92" height="1.7" fill="#a6acb9" opacity="0.5"/><rect x="33.93" y="54" width="9.17" height="1.7" fill="#99c794" opacity="0.7"/><rect x="44.02" y="54" width="5.50" height="1.7" fill="#99c794" opacity="0.7"/><rect x="49.52" y="54" width="0.92" height="1.7" fill="#a6acb9" opacity="0.5"/><rect x="50.44" y="54" width="0.92" height="1.7" fill="#a6acb9" opacity="0.5"/><rect x="52.27" y="54" width="0.92" height="1.7" fill="#5fb4b4" opacity="0.7"/><rect x="53.19" y="54" width="8.25" height="1.7" fill="#d8dee9" opacity="0.5"/><rect x="61.44" y="54" width="1.83" height="1.7" fill="#a6acb9" opacity="0.5"/><rect x="63.27" y="54" width="5.50" height="1.7" fill="#6699cc" opacity="0.7"/><rect x="68.78" y="54" width="2.75" height="1.7" fill="#d8dee9" opacity="0.5"/><rect x="71.53" y="54" width="0.92" height="1.7" fill="#a6acb9" opacity="0.5"/><rect x="7.34" y="56" width="0.92" height="1.7" fill="#d8dee9" opacity="0.5"/><rect x="7.34" y="60" width="0.92" height="1.7" fill="#5fb4b4" opacity="0.7"/><rect x="8.25" y="60" width="4.58" height="1.7" fill="#d8dee9" opacity="0.5"/><rect x="13.76" y="60" width="0.92" height="1.7" fill="#f97b58" opacity="0.7"/><rect x="15.59" y="60" width="0.92" height="1.7" fill="#5fb4b4" opacity="0.7"/><rect x="16.51" y="60" width="6.42" height="1.7" fill="#d8dee9" opacity="0.5"/><rect x="22.93" y="60" width="1.83" height="1.7" fill="#a6acb9" opacity="0.5"/><rect x="24.76" y="60" width="2.75" height="1.7" fill="#6699cc" opacity="0.7"/><rect x="27.51" y="60" width="1.83" height="1.7" fill="#d8dee9" opacity="0.5"/><rect x="29.34" y="60" width="0.92" height="1.7" fill="#a6acb9" opacity="0.5"/><rect x="7.34" y="62" width="0.92" height="1.7" fill="#5fb4b4" opacity="0.7"/><rect x="8.25" y="62" width="5.50" height="1.7" fill="#d8dee9" opacity="0.5"/><rect x="13.76" y="62" width="0.92" height="1.7" fill="#a6acb9" opacity="0.5"/><rect x="14.67" y="62" width="7.34" height="1.7" fill="#99c794" opacity="0.7"/><rect x="22.01" y="62" width="0.92" height="1.7" fill="#a6acb9" opacity="0.5"/><rect x="22.93" y="62" width="0.92" height="1.7" fill="#d8dee9" opacity="0.5"/><rect x="24.76" y="62" width="0.92" height="1.7" fill="#f97b58" opacity="0.7"/><rect x="26.59" y="62" width="5.50" height="1.7" fill="#6699cc" opacity="0.7"/><rect x="32.09" y="62" width="0.92" height="1.7" fill="#d8dee9" opacity="0.5"/><rect x="33.01" y="62" width="0.92" height="1.7" fill="#5fb4b4" opacity="0.7"/><rect x="33.93" y="62" width="5.50" height="1.7" fill="#d8dee9" opacity="0.5"/><rect x="39.43" y="62" width="0.92" height="1.7" fill="#a6acb9" opacity="0.5"/><rect x="40.35" y="62" width="7.34" height="1.7" fill="#99c794" opacity="0.7"/><rect x="47.68" y="62" width="0.92" height="1.7" fill="#a6acb9" opacity="0.5"/><rect x="48.60" y="62" width="1.83" height="1.7" fill="#d8dee9" opacity="0.5"/><rect x="50.44" y="62" width="0.92" height="1.7" fill="#a6acb9" opacity="0.5"/><rect x="7.34" y="64" width="0.92" height="1.7" fill="#5fb4b4" opacity="0.7"/><rect x="8.25" y="64" width="3.67" height="1.7" fill="#d8dee9" opacity="0.5"/><rect x="12.84" y="64" width="0.92" height="1.7" fill="#f97b58" opacity="0.7"/><rect x="14.67" y="64" width="3.67" height="1.7" fill="#6699cc" opacity="0.7"/><rect x="18.34" y="64" width="1.83" height="1.7" fill="#a6acb9" opacity="0.5"/><rect x="20.17" y="64" width="5.50" height="1.7" fill="#6699cc" opacity="0.7"/><rect x="25.68" y="64" width="0.92" height="1.7" fill="#d8dee9" opacity="0.5"/><rect x="26.59" y="64" width="0.92" height="1.7" fill="#5fb4b4" opacity="0.7"/><rect x="27.51" y="64" width="5.50" height="1.7" fill="#d8dee9" opacity="0.5"/><rect x="33.01" y="64" width="0.92" height="1.7" fill="#a6acb9" opacity="0.5"/><rect x="7.34" y="66" width="0.92" height="1.7" fill="#5fb4b4" opacity="0.7"/><rect x="8.25" y="66" width="7.34" height="1.7" fill="#d8dee9" opacity="0.5"/><rect x="15.59" y="66" width="0.92" height="1.7" fill="#a6acb9" opacity="0.5"/><rect x="16.51" y="66" width="4.58" height="1.7" fill="#99c794" opacity="0.7"/><rect x="21.09" y="66" width="0.92" height="1.7" fill="#a6acb9" opacity="0.5"/><rect x="22.01" y="66" width="0.92" height="1.7" fill="#d8dee9" opacity="0.5"/><rect x="23.84" y="66" width="0.92" height="1.7" fill="#f97b58" opacity="0.7"/><rect x="26.59" y="66" width="0.92" height="1.7" fill="#5fb4b4" opacity="0.7"/><rect x="27.51" y="66" width="3.67" height="1.7" fill="#d8dee9" opacity="0.5"/><rect x="31.18" y="66" width="1.83" height="1.7" fill="#a6acb9" opacity="0.5"/><rect x="33.01" y="66" width="10.09" height="1.7" fill="#6699cc" opacity="0.7"/><rect x="43.10" y="66" width="0.92" height="1.7" fill="#d8dee9" opacity="0.5"/><rect x="44.02" y="66" width="0.92" height="1.7" fill="#a6acb9" opacity="0.5"/><rect x="44.93" y="66" width="11.00" height="1.7" fill="#99c794" opacity="0.7"/><rect x="55.94" y="66" width="0.92" height="1.7" fill="#a6acb9" opacity="0.5"/><rect x="56.85" y="66" width="0.92" height="1.7" fill="#d8dee9" opacity="0.5"/><rect x="57.77" y="66" width="1.83" height="1.7" fill="#a6acb9" opacity="0.5"/><rect x="59.61" y="66" width="12.84" height="1.7" fill="#d8dee9" opacity="0.5"/><rect x="72.44" y="66" width="0.92" height="1.7" fill="#a6acb9" opacity="0.5"/><rect x="7.34" y="68" width="0.92" height="1.7" fill="#5fb4b4" opacity="0.7"/><rect x="8.25" y="68" width="7.34" height="1.7" fill="#d8dee9" opacity="0.5"/><rect x="15.59" y="68" width="0.92" height="1.7" fill="#a6acb9" opacity="0.5"/><rect x="16.51" y="68" width="3.67" height="1.7" fill="#99c794" opacity="0.7"/><rect x="20.17" y="68" width="0.92" height="1.7" fill="#a6acb9" opacity="0.5"/><rect x="21.09" y="68" width="0.92" height="1.7" fill="#d8dee9" opacity="0.5"/><rect x="22.93" y="68" width="0.92" height="1.7" fill="#f97b58" opacity="0.7"/><rect x="25.68" y="68" width="0.92" height="1.7" fill="#5fb4b4" opacity="0.7"/><rect x="26.59" y="68" width="3.67" height="1.7" fill="#d8dee9" opacity="0.5"/><rect x="30.26" y="68" width="1.83" height="1.7" fill="#a6acb9" opacity="0.5"/><rect x="32.09" y="68" width="3.67" height="1.7" fill="#d8dee9" opacity="0.5"/><rect x="35.76" y="68" width="0.92" height="1.7" fill="#a6acb9" opacity="0.5"/><rect x="7.34" y="72" width="5.50" height="1.7" fill="#c695c6" opacity="0.7"/><rect x="13.76" y="72" width="0.92" height="1.7" fill="#5fb4b4" opacity="0.7"/><rect x="14.67" y="72" width="3.67" height="1.7" fill="#ec5f66" opacity="0.7"/><rect x="18.34" y="72" width="1.83" height="1.7" fill="#a6acb9" opacity="0.5"/><rect x="20.17" y="72" width="11.00" height="1.7" fill="#6699cc" opacity="0.7"/><rect x="31.18" y="72" width="0.92" height="1.7" fill="#d8dee9" opacity="0.5"/><rect x="32.09" y="72" width="0.92" height="1.7" fill="#5fb4b4" opacity="0.7"/><rect x="33.01" y="72" width="6.42" height="1.7" fill="#d8dee9" opacity="0.5"/><rect x="39.43" y="72" width="0.92" height="1.7" fill="#a6acb9" opacity="0.5"/><rect x="41.27" y="72" width="0.92" height="1.7" fill="#a6acb9" opacity="0.5"/><rect x="42.18" y="72" width="3.67" height="1.7" fill="#99c794" opacity="0.7"/><rect x="46.77" y="72" width="7.34" height="1.7" fill="#99c794" opacity="0.7"/><rect x="55.02" y="72" width="11.92" height="1.7" fill="#99c794" opacity="0.7"/><rect x="66.94" y="72" width="0.92" height="1.7" fill="#a6acb9" opacity="0.5"/><rect x="67.86" y="72" width="0.92" height="1.7" fill="#d8dee9" opacity="0.5"/><rect x="68.78" y="72" width="0.92" height="1.7" fill="#a6acb9" opacity="0.5"/><rect x="3.67" y="74" width="0.92" height="1.7" fill="#d8dee9" opacity="0.5"/><rect x="3.67" y="78" width="2.75" height="1.7" fill="#a6acb9" opacity="0.5"/><rect x="4.58" y="80" width="0.92" height="1.7" fill="#a6acb9" opacity="0.5"/><rect x="6.42" y="80" width="4.58" height="1.7" fill="#a6acb9" opacity="0.5"/><rect x="11.92" y="80" width="2.75" height="1.7" fill="#a6acb9" opacity="0.5"/><rect x="4.58" y="82" width="0.92" height="1.7" fill="#a6acb9" opacity="0.5"/><rect x="4.58" y="84" width="0.92" height="1.7" fill="#a6acb9" opacity="0.5"/><rect x="6.42" y="84" width="6.42" height="1.7" fill="#ec5f66" opacity="0.7"/><rect x="13.76" y="84" width="22.93" height="1.7" fill="#a6acb9" opacity="0.5"/><rect x="4.58" y="86" width="1.83" height="1.7" fill="#a6acb9" opacity="0.5"/><rect x="3.67" y="88" width="5.50" height="1.7" fill="#ec5f66" opacity="0.7"/><rect x="10.09" y="88" width="7.34" height="1.7" fill="#c695c6" opacity="0.7"/><rect x="18.34" y="88" width="4.58" height="1.7" fill="#5fb4b4" opacity="0.7"/><rect x="22.93" y="88" width="0.92" height="1.7" fill="#d8dee9" opacity="0.5"/><rect x="23.84" y="88" width="6.42" height="1.7" fill="#6699cc" opacity="0.7"/><rect x="31.18" y="88" width="0.92" height="1.7" fill="#5fb4b4" opacity="0.7"/><rect x="32.09" y="88" width="6.42" height="1.7" fill="#f9ae58" opacity="0.7"/><rect x="38.51" y="88" width="0.92" height="1.7" fill="#d8dee9" opacity="0.5"/><rect x="3.67" y="90" width="0.92" height="1.7" fill="#d8dee9" opacity="0.5"/><rect x="7.34" y="92" width="1.83" height="1.7" fill="#c695c6" opacity="0.7"/><rect x="9.17" y="92" width="0.92" height="1.7" fill="#d8dee9" opacity="0.5"/><rect x="10.09" y="92" width="3.67" height="1.7" fill="#6699cc" opacity="0.7"/><rect x="13.76" y="92" width="1.83" height="1.7" fill="#a6acb9" opacity="0.5"/><rect x="15.59" y="92" width="6.42" height="1.7" fill="#6699cc" opacity="0.7"/><rect x="22.01" y="92" width="1.83" height="1.7" fill="#d8dee9" opacity="0.5"/><rect x="23.84" y="92" width="0.92" height="1.7" fill="#a6acb9" opacity="0.5"/><rect x="24.76" y="92" width="4.58" height="1.7" fill="#99c794" opacity="0.7"/><rect x="29.34" y="92" width="0.92" height="1.7" fill="#a6acb9" opacity="0.5"/><rect x="31.18" y="92" width="1.83" height="1.7" fill="#a6acb9" opacity="0.5"/><rect x="33.93" y="92" width="0.92" height="1.7" fill="#5fb4b4" opacity="0.7"/><rect x="34.85" y="92" width="6.42" height="1.7" fill="#d8dee9" opacity="0.5"/><rect x="41.27" y="92" width="1.83" height="1.7" fill="#a6acb9" opacity="0.5"/><rect x="43.10" y="92" width="4.58" height="1.7" fill="#d8dee9" opacity="0.5"/><rect x="47.68" y="92" width="0.92" height="1.7" fill="#a6acb9" opacity="0.5"/><rect x="49.52" y="92" width="0.92" height="1.7" fill="#a6acb9" opacity="0.5"/><rect x="50.44" y="92" width="7.34" height="1.7" fill="#99c794" opacity="0.7"/><rect x="57.77" y="92" width="0.92" height="1.7" fill="#a6acb9" opacity="0.5"/><rect x="59.61" y="92" width="1.83" height="1.7" fill="#a6acb9" opacity="0.5"/><rect x="62.36" y="92" width="0.92" height="1.7" fill="#5fb4b4" opacity="0.7"/><rect x="63.27" y="92" width="6.42" height="1.7" fill="#d8dee9" opacity="0.5"/><rect x="69.69" y="92" width="1.83" height="1.7" fill="#a6acb9" opacity="0.5"/><rect x="71.53" y="92" width="11.00" height="1.7" fill="#d8dee9" opacity="0.5"/><rect x="11.00" y="94" width="0.92" height="1.7" fill="#5fb4b4" opacity="0.7"/><rect x="11.92" y="94" width="3.67" height="1.7" fill="#d8dee9" opacity="0.5"/><rect x="16.51" y="94" width="0.92" height="1.7" fill="#f97b58" opacity="0.7"/><rect x="18.34" y="94" width="3.67" height="1.7" fill="#6699cc" opacity="0.7"/><rect x="22.01" y="94" width="1.83" height="1.7" fill="#a6acb9" opacity="0.5"/><rect x="23.84" y="94" width="3.67" height="1.7" fill="#6699cc" opacity="0.7"/><rect x="27.51" y="94" width="1.83" height="1.7" fill="#d8dee9" opacity="0.5"/><rect x="29.34" y="94" width="0.92" height="1.7" fill="#a6acb9" opacity="0.5"/><rect x="11.00" y="96" width="0.92" height="1.7" fill="#5fb4b4" opacity="0.7"/><rect x="11.92" y="96" width="7.34" height="1.7" fill="#d8dee9" opacity="0.5"/><rect x="19.26" y="96" width="0.92" height="1.7" fill="#a6acb9" opacity="0.5"/><rect x="20.17" y="96" width="4.58" height="1.7" fill="#99c794" opacity="0.7"/><rect x="24.76" y="96" width="0.92" height="1.7" fill="#a6acb9" opacity="0.5"/><rect x="25.68" y="96" width="0.92" height="1.7" fill="#d8dee9" opacity="0.5"/><rect x="27.51" y="96" width="0.92" height="1.7" fill="#f97b58" opacity="0.7"/><rect x="30.26" y="96" width="0.92" height="1.7" fill="#5fb4b4" opacity="0.7"/><rect x="31.18" y="96" width="3.67" height="1.7" fill="#d8dee9" opacity="0.5"/><rect x="34.85" y="96" width="1.83" height="1.7" fill="#a6acb9" opacity="0.5"/><rect x="36.68" y="96" width="10.09" height="1.7" fill="#6699cc" opacity="0.7"/><rect x="46.77" y="96" width="0.92" height="1.7" fill="#d8dee9" opacity="0.5"/><rect x="47.68" y="96" width="0.92" height="1.7" fill="#a6acb9" opacity="0.5"/><rect x="48.60" y="96" width="11.00" height="1.7" fill="#99c794" opacity="0.7"/><rect x="59.61" y="96" width="0.92" height="1.7" fill="#a6acb9" opacity="0.5"/><rect x="60.52" y="96" width="0.92" height="1.7" fill="#d8dee9" opacity="0.5"/><rect x="61.44" y="96" width="1.83" height="1.7" fill="#a6acb9" opacity="0.5"/><rect x="63.27" y="96" width="12.84" height="1.7" fill="#d8dee9" opacity="0.5"/><rect x="76.11" y="96" width="0.92" height="1.7" fill="#a6acb9" opacity="0.5"/><rect x="11.00" y="98" width="0.92" height="1.7" fill="#5fb4b4" opacity="0.7"/><rect x="11.92" y="98" width="7.34" height="1.7" fill="#d8dee9" opacity="0.5"/><rect x="19.26" y="98" width="0.92" height="1.7" fill="#a6acb9" opacity="0.5"/><rect x="20.17" y="98" width="3.67" height="1.7" fill="#99c794" opacity="0.7"/><rect x="23.84" y="98" width="0.92" height="1.7" fill="#a6acb9" opacity="0.5"/><rect x="24.76" y="98" width="0.92" height="1.7" fill="#d8dee9" opacity="0.5"/><rect x="26.59" y="98" width="0.92" height="1.7" fill="#f97b58" opacity="0.7"/><rect x="29.34" y="98" width="0.92" height="1.7" fill="#5fb4b4" opacity="0.7"/><rect x="30.26" y="98" width="3.67" height="1.7" fill="#d8dee9" opacity="0.5"/><rect x="33.93" y="98" width="1.83" height="1.7" fill="#a6acb9" opacity="0.5"/><rect x="35.76" y="98" width="3.67" height="1.7" fill="#d8dee9" opacity="0.5"/><rect x="39.43" y="98" width="0.92" height="1.7" fill="#a6acb9" opacity="0.5"/><rect x="11.00" y="102" width="5.50" height="1.7" fill="#c695c6" opacity="0.7"/><rect x="17.42" y="102" width="0.92" height="1.7" fill="#5fb4b4" opacity="0.7"/><rect x="18.34" y="102" width="3.67" height="1.7" fill="#ec5f66" opacity="0.7"/><rect x="22.01" y="102" width="1.83" height="1.7" fill="#a6acb9" opacity="0.5"/><rect x="23.84" y="102" width="11.00" height="1.7" fill="#6699cc" opacity="0.7"/><rect x="34.85" y="102" width="0.92" height="1.7" fill="#d8dee9" opacity="0.5"/><rect x="35.76" y="102" width="0.92" height="1.7" fill="#5fb4b4" opacity="0.7"/><rect x="36.68" y="102" width="6.42" height="1.7" fill="#d8dee9" opacity="0.5"/><rect x="43.10" y="102" width="0.92" height="1.7" fill="#a6acb9" opacity="0.5"/><rect x="44.93" y="102" width="0.92" height="1.7" fill="#a6acb9" opacity="0.5"/><rect x="45.85" y="102" width="3.67" height="1.7" fill="#99c794" opacity="0.7"/><rect x="50.44" y="102" width="4.58" height="1.7" fill="#99c794" opacity="0.7"/><rect x="55.94" y="102" width="11.92" height="1.7" fill="#99c794" opacity="0.7"/><rect x="67.86" y="102" width="0.92" height="1.7" fill="#a6acb9" opacity="0.5"/><rect x="68.78" y="102" width="0.92" height="1.7" fill="#d8dee9" opacity="0.5"/><rect x="69.69" y="102" width="0.92" height="1.7" fill="#a6acb9" opacity="0.5"/><rect x="7.34" y="104" width="0.92" height="1.7" fill="#d8dee9" opacity="0.5"/><rect x="7.34" y="106" width="3.67" height="1.7" fill="#c695c6" opacity="0.7"/><rect x="11.00" y="106" width="0.92" height="1.7" fill="#d8dee9" opacity="0.5"/><rect x="11.00" y="108" width="5.50" height="1.7" fill="#c695c6" opacity="0.7"/><rect x="17.42" y="108" width="0.92" height="1.7" fill="#5fb4b4" opacity="0.7"/><rect x="18.34" y="108" width="3.67" height="1.7" fill="#ec5f66" opacity="0.7"/><rect x="22.01" y="108" width="1.83" height="1.7" fill="#a6acb9" opacity="0.5"/><rect x="23.84" y="108" width="8.25" height="1.7" fill="#6699cc" opacity="0.7"/><rect x="32.09" y="108" width="0.92" height="1.7" fill="#d8dee9" opacity="0.5"/><rect x="33.01" y="108" width="0.92" height="1.7" fill="#a6acb9" opacity="0.5"/><rect x="33.93" y="108" width="11.92" height="1.7" fill="#99c794" opacity="0.7"/><rect x="45.85" y="108" width="0.92" height="1.7" fill="#a6acb9" opacity="0.5"/><rect x="46.77" y="108" width="0.92" height="1.7" fill="#a6acb9" opacity="0.5"/><rect x="48.60" y="108" width="0.92" height="1.7" fill="#d8dee9" opacity="0.5"/><rect x="49.52" y="108" width="0.92" height="1.7" fill="#a6acb9" opacity="0.5"/><rect x="50.44" y="108" width="4.58" height="1.7" fill="#99c794" opacity="0.7"/><rect x="55.02" y="108" width="0.92" height="1.7" fill="#a6acb9" opacity="0.5"/><rect x="55.94" y="108" width="1.83" height="1.7" fill="#a6acb9" opacity="0.5"/><rect x="57.77" y="108" width="0.92" height="1.7" fill="#a6acb9" opacity="0.5"/><rect x="58.69" y="108" width="11.00" height="1.7" fill="#99c794" opacity="0.7"/><rect x="69.69" y="108" width="0.92" height="1.7" fill="#a6acb9" opacity="0.5"/><rect x="70.61" y="108" width="1.83" height="1.7" fill="#d8dee9" opacity="0.5"/><rect x="72.44" y="108" width="0.92" height="1.7" fill="#a6acb9" opacity="0.5"/><rect x="7.34" y="110" width="0.92" height="1.7" fill="#d8dee9" opacity="0.5"/><rect x="3.67" y="112" width="0.92" height="1.7" fill="#d8dee9" opacity="0.5"/><rect x="0.00" y="114" width="0.92" height="1.7" fill="#d8dee9" opacity="0.5"/></svg><div class="a" style="left:1069px;top:6px;width:7px;height:621px;border-radius:3px;background:#464c54"></div><div class="a" style="left:1069px;top:6px;width:7px;height:236px;border-radius:3px;background:#6b7079"></div></div><div id="status" class="a"><svg class="a" style="left:11px;top:5px" width="14" height="12"><rect x="0.5" y="0.5" width="13" height="11" rx="1.5" fill="#cfd2d8" stroke="#6f7378"/><rect x="0.5" y="0.5" width="5" height="11" rx="1" fill="#6f7378"/></svg><div class="a" style="left:36px;top:3px;font-size:11px;letter-spacing:-0.1px;line-height:16px;color:#3a3a3a;white-space:pre">Line 34, Column 62</div><div class="a" style="left:1186px;top:3px;font-size:11px;letter-spacing:-0.4px;line-height:16px;color:#3a3a3a;white-space:pre">Spaces: 4</div><div class="a" style="left:1298px;top:3px;font-size:11px;letter-spacing:-0.6px;line-height:16px;color:#3a3a3a;white-space:pre">PHP</div></div><div id="task" class="a"><svg class="a" style="left:15px;top:11px" width="18" height="17" viewBox="0 0 18 17"><path d="M0.5 2.6 L7.4 1.6 V8 H0.5Z M8.3 1.5 L17.3 0.2 V8 H8.3Z M0.5 8.9 H7.4 V15.4 L0.5 14.4Z M8.3 8.9 H17.3 V16.8 L8.3 15.5Z" fill="#fff"/></svg><div class="a" style="left:48px;top:0;width:344px;height:40px;background:#f2f2f2;border-top:1px solid #d6d6d6;border-bottom:1px solid #c9c9c9"></div><svg class="a" style="left:59px;top:11px" width="18" height="18" viewBox="0 0 18 18"><circle cx="11" cy="6.6" r="5.3" fill="none" stroke="#222" stroke-width="1.3"/><path d="M7.2 10.4 L1.3 16.5" stroke="#222" stroke-width="1.4"/></svg><div class="a" style="left:88px;top:12px;font-size:14.5px;line-height:18px;color:#2b2b2b;white-space:pre">Type here to search</div><svg class="a" style="left:406px;top:10px" width="20" height="20"><circle cx="9.7" cy="10" r="6.6" fill="none" stroke="#fff" stroke-width="2"/></svg><svg class="a" style="left:455px;top:11px" width="18" height="17" viewBox="0 0 18 17"><path d="M1.5 1 V3.5 H12.5 V1 M1.5 16.5 V13.5 H12.5 V16.5 M15.5 0.5 V4 M15.5 9 V16.5" fill="none" stroke="#fff" stroke-width="1"/><rect x="1.5" y="6.5" width="11" height="5" fill="none" stroke="#fff" stroke-width="1"/><rect x="14" y="5" width="3" height="3" fill="#fff"/></svg><div class="a" style="left:544px;top:38px;width:40px;height:2px;background:#76b9ed"></div><div class="a" style="left:691px;top:38px;width:40px;height:2px;background:#76b9ed"></div><div class="a" style="left:789px;top:38px;width:31px;height:2px;background:#76b9ed"></div><div class="a" style="left:820px;top:38px;width:9px;height:2px;background:#4f7fa6"></div><div class="a" style="left:834px;top:38px;width:48px;height:2px;background:#76b9ed"></div><div class="a" style="left:887px;top:38px;width:40px;height:2px;background:#76b9ed"></div><div class="a" style="left:936px;top:38px;width:40px;height:2px;background:#76b9ed"></div><div class="a" style="left:834px;top:0;width:48px;height:38px;background:#33414c"></div><svg class="a" style="left:503px;top:8px" width="24" height="24" viewBox="0 0 24 24"><defs><linearGradient id="eg1" x1="0" y1="0" x2="1" y2="0.6"><stop offset="0" stop-color="#33b6f0"/><stop offset="0.5" stop-color="#2fc2cf"/><stop offset="1" stop-color="#72ea5a"/></linearGradient><linearGradient id="eg2" x1="0" y1="0" x2="0.3" y2="1"><stop offset="0" stop-color="#2596e6"/><stop offset="1" stop-color="#1273d0"/></linearGradient><linearGradient id="eg3" x1="0" y1="0" x2="1" y2="1"><stop offset="0" stop-color="#125aaa"/><stop offset="1" stop-color="#0f4f98"/></linearGradient></defs><circle cx="12" cy="12" r="12" fill="url(#eg1)"/><path d="M0 12 C0 8 3 6 7 6 C10.5 6 13 8 13.5 11 L13.5 13 C13 15.5 14.5 17 17.5 17.5 C20 17.8 22.5 17.5 23.6 16.5 C22.5 21 17.5 24 12 24 C5.4 24 0 18.6 0 12Z" fill="url(#eg2)"/><path d="M6.8 14 C6.8 10.5 9 8.8 11.5 8.8 C13 8.8 14 10 14 11.5 C13.5 15 15.5 17.5 18.5 17.8 C20.5 18 22.5 17.5 23.6 16.5 C22 20.5 18 23.5 14 23.8 C10 23.8 6.8 19 6.8 14Z" fill="url(#eg3)"/><ellipse cx="11.6" cy="12.7" rx="2.4" ry="2.9" fill="#021720"/><path d="M14 15.5 C16 17.6 20 18 23.6 16.7" fill="none" stroke="#03223a" stroke-width="0.9"/></svg><svg class="a" style="left:553px;top:11px" width="22" height="19" viewBox="0 0 22 19"><defs><linearGradient id="xg" x1="0" y1="0" x2="0" y2="1"><stop offset="0" stop-color="#ffd86a"/><stop offset="1" stop-color="#ffc93a"/></linearGradient></defs><path d="M0 0.3 H9 L10.5 1.3 H21.2 V17.8 H0Z" fill="url(#xg)"/><path d="M0 0 H9.3 L10.6 1.3 L9.3 3 H0Z" fill="#e8a200"/><path d="M4 18.5 V11.3 Q4 10.2 5.1 10.2 H16.9 Q18 10.2 18 11.3 V18.5 H14 V13.5 H8 V18.5Z" fill="#3c92e6"/></svg><svg class="a" style="left:601px;top:7px" width="24" height="25" viewBox="0 0 24 25"><path d="M7.3 7 V5 C7.3 2.6 9 1.3 11.2 1.3 C13.4 1.3 15 2.6 15 5 V7 M10.3 7 V6 C10.3 4 11.2 2.8 12.5 2.3 M15 3.2 C16.5 3.5 17.6 4.5 17.6 6 V7" fill="none" stroke="#fff" stroke-width="1.1"/><path d="M0 7 H23 V22.5 Q23 24 21.5 24 H1.5 Q0 24 0 22.5Z" fill="#fff"/><rect x="6" y="10.5" width="5" height="5" fill="#f25022"/><rect x="12" y="10.5" width="5" height="5" fill="#7fba00"/><rect x="6" y="16.5" width="5" height="5" fill="#00a4ef"/><rect x="12" y="16.5" width="5" height="5" fill="#ffb900"/></svg><svg class="a" style="left:650px;top:10px" width="25" height="20" viewBox="0 0 25 20"><path d="M0 5.2 L12 -0.3 L24 5.2 V19 H0Z" fill="#fff"/><path d="M1 6.5 H23.5 L14 11.5 L19 15.5 Z" fill="#021720"/></svg><svg class="a" style="left:699px;top:8px" width="27" height="26" viewBox="0 0 27 26"><circle cx="12" cy="12" r="12" fill="#34a853"/><path d="M23 7.2 A12 12 0 0 0 2.34 4.87 L7.84 14.4 A4.8 4.8 0 0 1 12 7.2Z" fill="#ea4335"/><path d="M23 7.2 A12 12 0 0 1 10.66 23.93 L16.16 14.4 A4.8 4.8 0 0 0 12 7.2Z" fill="#fbbc04"/><circle cx="12" cy="12" r="5.6" fill="#fff"/><circle cx="12" cy="12" r="4.5" fill="#4285f4"/><circle cx="18.1" cy="17.8" r="7.7" fill="#6a9c3a"/><path d="M16.5 22 V14.3 H18.6 Q20.8 14.3 20.8 16.6 Q20.8 18.9 18.6 18.9 H16.5" fill="none" stroke="#e8f0dc" stroke-width="1.2"/></svg><svg class="a" style="left:750px;top:8px" width="21" height="24" viewBox="0 0 21 24"><defs><linearGradient id="bg1" x1="0" y1="0" x2="1" y2="0"><stop offset="0" stop-color="#ff6000"/><stop offset="1" stop-color="#f52a10"/></linearGradient></defs><path d="M4.5 0.2 H16 L17.8 2 L20.3 2.6 L19.4 6.5 L20.4 9 L18.6 15.5 C17 18.5 14 21 10.25 24 C6.5 21 3.5 18.5 1.9 15.5 L0.1 9 L1.1 6.5 L0.2 2.6 L2.7 2Z" fill="url(#bg1)"/><path d="M2.8 5.2 L6 3.4 H14.5 L17.7 5.2 L17.3 8.6 L15.8 11.2 L14.6 14.3 L12.4 16.8 L10.25 18.2 L8.1 16.8 L5.9 14.3 L4.7 11.2 L3.2 8.6Z" fill="#fff"/><path d="M5.8 7.2 L8.5 8.2 L8 10 M14.7 7.2 L12 8.2 L12.5 10 M9 11.5 H11.5 L10.25 13.5Z" fill="none" stroke="#f75a0f" stroke-width="1.1"/></svg><svg class="a" style="left:797px;top:8px" width="25" height="23" viewBox="0 0 25 23"><rect x="6" y="0.8" width="18" height="5.4" fill="#41a5ee"/><rect x="6" y="6.2" width="18" height="5" fill="#2b7cd3"/><rect x="6" y="11.2" width="18" height="5" fill="#185abd"/><rect x="6" y="16.2" width="18" height="5.8" fill="#103f91"/><rect x="0" y="6" width="12.5" height="12" fill="#1a5fc4"/><path d="M2.4 8.4 L4 15.3 L6.2 10.4 L8.4 15.3 L10 8.4" fill="none" stroke="#fff" stroke-width="1.8"/></svg><svg class="a" style="left:846px;top:8px" width="24" height="24" viewBox="0 0 24 24"><defs><linearGradient id="sg" x1="0" y1="0" x2="0" y2="1"><stop offset="0" stop-color="#454545"/><stop offset="1" stop-color="#393939"/></linearGradient></defs><rect x="0" y="0" width="24" height="24" rx="2" fill="url(#sg)"/><path d="M5.83 7.08 L17.5 3.75 L17.5 8.54 L13.75 9.79 L17.5 11.67 L17.5 16.04 L5.83 20 L5.83 15 L9.58 13.75 L5.83 12.71Z" fill="#ff9800"/><path d="M9.58 13.75 L17.5 16.04 L17.5 15 L11 13Z" fill="#d97f00" opacity="0.5"/></svg><svg class="a" style="left:895px;top:8px" width="24" height="24" viewBox="0 0 24 24"><circle cx="12" cy="12" r="12" fill="#e95420"/><circle cx="12" cy="12" r="5.6" fill="none" stroke="#fff" stroke-width="2"/><circle cx="4.2" cy="12" r="2.2" fill="#fff" stroke="#e95420" stroke-width="0.8"/><circle cx="16" cy="5.2" r="2.2" fill="#fff" stroke="#e95420" stroke-width="0.8"/><circle cx="16" cy="18.8" r="2.2" fill="#fff" stroke="#e95420" stroke-width="0.8"/></svg><svg class="a" style="left:943px;top:8px" width="26" height="25" viewBox="0 0 26 25"><defs><linearGradient id="pg" x1="0" y1="0" x2="1" y2="1"><stop offset="0" stop-color="#e4f3fb"/><stop offset="1" stop-color="#a9d3ec"/></linearGradient></defs><path d="M1.5 17 C0.5 12 5 5 13 4.2 C19 3.8 23 7 22.5 11.5 C22 16.5 16.5 21.5 9.5 21.3 C7 21.2 5.5 19.5 6 18 C6.5 17 5.5 16.2 4.5 17.2 C3.5 18.2 2 18.5 1.5 17Z" fill="url(#pg)"/><circle cx="5.2" cy="13" r="1.8" fill="#e2403a"/><circle cx="9" cy="9.3" r="1.8" fill="#48b83a"/><circle cx="13.8" cy="7.2" r="2" fill="#f4b019"/><circle cx="10.7" cy="14.5" r="1.3" fill="#021320"/><path d="M12.4 23.6 L19.6 6" stroke="#ee8a25" stroke-width="2.2" stroke-linecap="round"/><path d="M19.6 6 L21.2 2.8" stroke="#9a9a9a" stroke-width="1.4"/><path d="M20.2 3 L23 0.6 L25.5 3.2 L22 4.6Z" fill="#dcb47a"/></svg><svg class="a" style="left:1016px;top:9px" width="24" height="22" viewBox="0 0 24 22"><defs><linearGradient id="wg" x1="0" y1="0" x2="0.3" y2="1"><stop offset="0" stop-color="#f8b92c"/><stop offset="1" stop-color="#f27a12"/></linearGradient></defs><circle cx="10" cy="10.5" r="10" fill="url(#wg)"/><linearGradient id="cg" x1="0" y1="0" x2="0" y2="1"><stop offset="0" stop-color="#e3eefb"/><stop offset="1" stop-color="#a6c6ee"/></linearGradient><path d="M8 15.3 Q8 12.4 11 12.2 Q12 8.6 15.8 8.2 Q19.5 8.2 20.3 11.3 Q22.5 11.6 22.4 14.2 Q22.3 16.9 20 16.9 H9.6 Q8 16.9 8 15.3Z" fill="url(#cg)"/></svg><div class="a" style="left:1046px;top:12px;font-size:14.5px;line-height:18px;color:#fff;white-space:pre;transform:scaleX(0.935);transform-origin:0 0">31°C</div><svg class="a" style="left:1092px;top:16px" width="14" height="8"><path d="M0.7 7.3 L7 1 L13.3 7.3" fill="none" stroke="#fff" stroke-width="1.1"/></svg><svg class="a" style="left:1117px;top:11px" width="13" height="18" viewBox="0 0 13 18"><path d="M2 2.3 Q6 0.6 10.3 2.3 M2 15.4 Q6 17.1 10.3 15.4" fill="none" stroke="#fff" stroke-width="1.1"/><rect x="1.6" y="5.6" width="7.2" height="6.6" rx="1.4" fill="none" stroke="#fff" stroke-width="1.2"/><path d="M8.8 7.6 L11.9 6 V11.8 L8.8 10.2Z" fill="#fff"/></svg><svg class="a" style="left:1138px;top:14px" width="19" height="13" viewBox="0 0 19 13"><path d="M2.3 0 V2.6 M5 0 V2.6 M3.65 6.5 V11.5" fill="none" stroke="#fff" stroke-width="1"/><path d="M1 2.6 H6.3 V4.4 Q6.3 6.6 3.65 6.6 Q1 6.6 1 4.4Z" fill="none" stroke="#fff" stroke-width="1"/><path d="M7 2.2 H16.3 V10.5 H5.5 V7.5" fill="none" stroke="#fff" stroke-width="1.1"/><rect x="7.2" y="4" width="7.8" height="5" fill="#fff"/><rect x="16.5" y="4.6" width="1.2" height="3.6" fill="#fff"/></svg><svg class="a" style="left:1165px;top:14px" width="14" height="13" viewBox="0 0 14 13"><path d="M0.8 12.5 A11.8 11.8 0 0 1 12.8 0.7 M3.8 12.5 A8.8 8.8 0 0 1 12.8 3.7 M6.8 12.5 A5.8 5.8 0 0 1 12.8 6.7" fill="none" stroke="#fff" stroke-width="1.2"/><circle cx="11.6" cy="11.4" r="1.6" fill="#fff"/></svg><svg class="a" style="left:1186px;top:12px" width="18" height="16" viewBox="0 0 18 16"><path d="M0.8 5 H3.5 L7.5 1 V14.5 L3.5 10.5 H0.8Z" fill="none" stroke="#fff" stroke-width="1"/><path d="M9.5 5.5 Q11 7.7 9.5 10 M11.8 3.5 Q14.5 7.7 11.8 12 M14.2 1 Q18.2 7.7 14.2 14.5" fill="none" stroke="#fff" stroke-width="1"/></svg><div class="a" style="left:1213px;top:13px;font-size:12.5px;line-height:16px;color:#fff;white-space:pre;transform:scaleX(0.85);transform-origin:0 0">ENG</div><div class="a" style="left:1265px;top:4px;font-size:12px;line-height:16px;color:#fff;white-space:pre;transform:scaleX(0.89);transform-origin:0 0">13:43</div><div class="a" style="left:1248px;top:22px;font-size:12px;line-height:16px;color:#fff;white-space:pre;transform:scaleX(0.944);transform-origin:0 0">25-01-2023</div><svg class="a" style="left:1325px;top:11px" width="17" height="17" viewBox="0 0 17 17"><path d="M0 0.8 H16.3 V13.3 H10.8 L8.1 16.5 L5.4 13.3 H0Z" fill="#fff"/><path d="M3 4.2 H13.2 M3 7.3 H13.2 M3 10.2 H8.8" stroke="#020c1b" stroke-width="1"/></svg><div class="a" style="left:1361px;top:0;width:1px;height:40px;background:#5b6670"></div></div></body></html>
